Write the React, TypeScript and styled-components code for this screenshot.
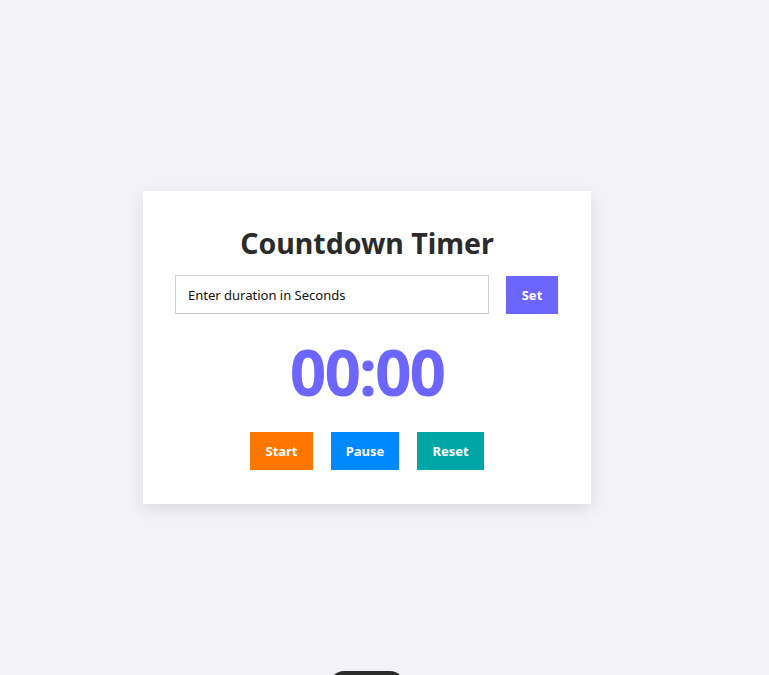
import React from "react";
import styled, { createGlobalStyle } from "styled-components";

const Global = createGlobalStyle`
  html, body { margin: 0; padding: 0; }
  body {
    background: #f3f2f8;
    font-family: "Noto Sans", "Open Sans", sans-serif;
    overflow: hidden;
  }
`;

const Page = styled.div`
  min-height: 675px;
  padding: 191px 0 0 143px;
  box-sizing: border-box;
`;

const Card = styled.div`
  width: 448px;
  box-sizing: border-box;
  background: #ffffff;
  padding: 32px 32px 34px;
  box-shadow: 0 5px 15px rgba(0, 0, 0, 0.1);
  display: flex;
  flex-direction: column;
  align-items: center;
`;

const Title = styled.h1`
  margin: 0 0 12px;
  font-size: 28.5px;
  line-height: 40px;
  font-weight: 700;
  color: #2b2b2b;
`;

const InputRow = styled.div`
  display: flex;
  align-self: stretch;
  gap: 17px;
  align-items: center;
`;

const Input = styled.input`
  width: 314px;
  height: 39px;
  box-sizing: border-box;
  border: 1px solid #cfcfd6;
  padding: 0 12px;
  font-family: inherit;
  font-size: 13px;
  color: #111;
  outline: none;
  &::placeholder { color: #111; }
`;

const Btn = styled.button<{ $bg: string; $w: number }>`
  width: ${(p) => p.$w}px;
  height: 38px;
  border: none;
  background: ${(p) => p.$bg};
  color: #fff;
  font-family: inherit;
  font-weight: 700;
  font-size: 13px;
  cursor: pointer;
  padding: 0;
`;

const Time = styled.div`
  margin: 18px 0 20px;
  font-size: 64px;
  line-height: 80px;
  font-weight: 700;
  color: #6c66ff;
  letter-spacing: -2px;
`;

const Buttons = styled.div`
  display: flex;
  gap: 18px;
`;

const Pill = styled.div`
  position: fixed;
  left: 330px;
  top: 671px;
  width: 74px;
  height: 30px;
  border-radius: 14px;
  background: #2c2c2c;
`;

export default function App() {
  return (
    <>
      <Global />
      <Page>
        <Card>
          <Title>Countdown Timer</Title>
          <InputRow>
            <Input placeholder="Enter duration in Seconds" />
            <Btn $bg="#6c66ff" $w={52}>Set</Btn>
          </InputRow>
          <Time>00:00</Time>
          <Buttons>
            <Btn $bg="#ff7700" $w={63}>Start</Btn>
            <Btn $bg="#0088ff" $w={68}>Pause</Btn>
            <Btn $bg="#00a6a6" $w={67}>Reset</Btn>
          </Buttons>
        </Card>
      </Page>
      <Pill />
    </>
  );
}
